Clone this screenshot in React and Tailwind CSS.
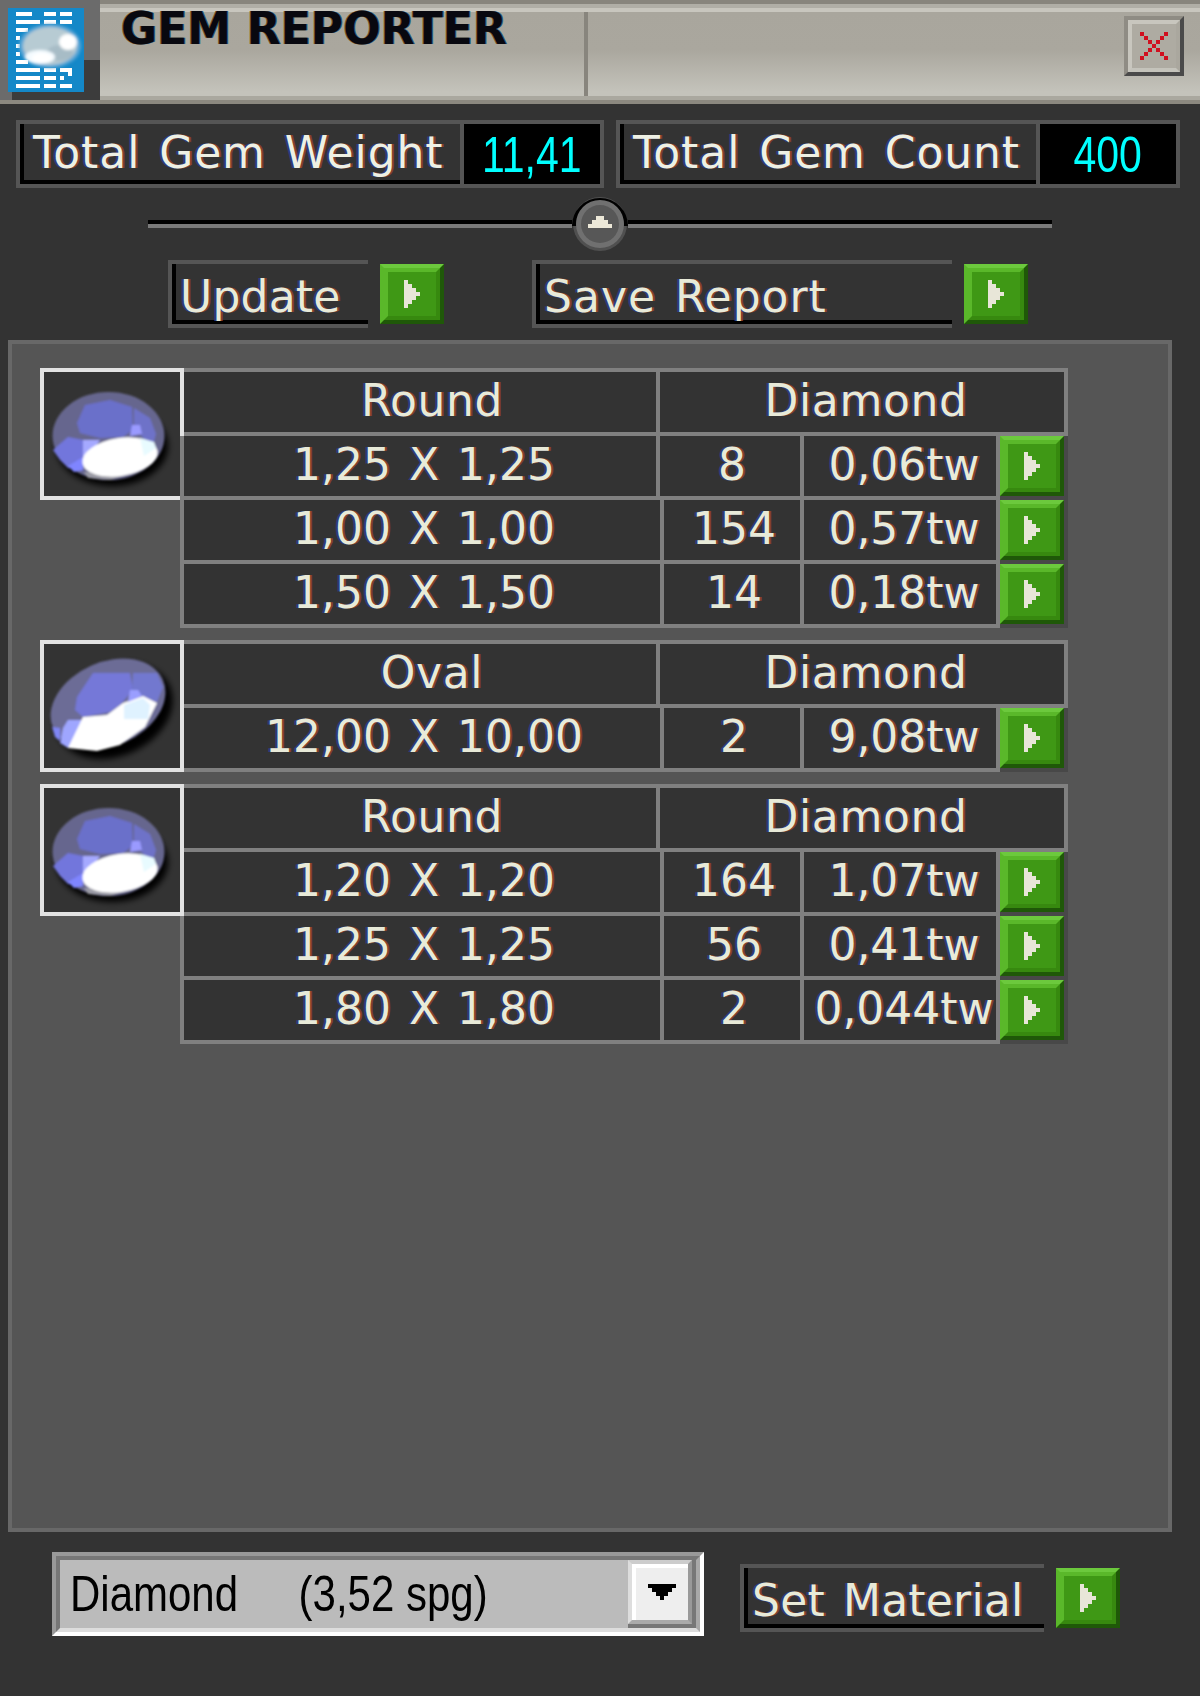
const LINE = "border-[#808080]";
const FRINGE = "[text-shadow:-2px_0_#2c3a7c,2px_0_#85402c]";

const groups = [
  {
    gem: "round",
    overIcon: true,
    shape: "Round",
    rows: [
      { size: "1,25 X 1,25", qty: "8", weight: "0,06tw", narrow: true },
      { size: "1,00 X 1,00", qty: "154", weight: "0,57tw" },
      { size: "1,50 X 1,50", qty: "14", weight: "0,18tw" },
    ],
  },
  {
    gem: "oval",
    shape: "Oval",
    rows: [{ size: "12,00 X 10,00", qty: "2", weight: "9,08tw" }],
  },
  {
    gem: "round",
    shape: "Round",
    rows: [
      { size: "1,20 X 1,20", qty: "164", weight: "1,07tw" },
      { size: "1,25 X 1,25", qty: "56", weight: "0,41tw" },
      { size: "1,80 X 1,80", qty: "2", weight: "0,044tw" },
    ],
  },
];

function AppIcon() {
  const lines = [
    [12, 16, 16], [12, 44, 12], [12, 60, 12],
    [20, 16, 24], [20, 44, 12], [20, 60, 12],
    [28, 16, 12], [36, 16, 4], [44, 16, 4], [52, 16, 4], [60, 16, 12],
    [68, 16, 24], [68, 44, 12], [68, 60, 12],
    [76, 16, 24], [76, 44, 12], [76, 60, 4],
    [84, 16, 24], [84, 44, 12], [84, 60, 12],
  ];
  return (
    <svg width="100" height="104" viewBox="0 0 100 104" className="block shrink-0" shapeRendering="crispEdges">
      <filter id="icon-soft"><feGaussianBlur stdDeviation="1.6" /></filter>
      <rect width="100" height="100" fill="#6b6b6b" />
      <rect x="84" y="60" width="16" height="40" fill="#3c3c3c" />
      <rect x="12" y="92" width="88" height="8" fill="#3c3c3c" />
      <rect y="100" width="100" height="4" fill="#8c8980" />
      <rect x="8" y="8" width="76" height="84" fill="#1488c8" />
      {lines.map(([y, x, w], i) => (
        <rect key={i} x={x} y={y} width={w} height="4" fill="#fff" />
      ))}
      <rect x="68" y="72" width="4" height="4" fill="#fff" />
      <g shapeRendering="auto" filter="url(#icon-soft)">
        <ellipse cx="50" cy="46" rx="31" ry="22" fill="#5aa6d6" />
        <ellipse cx="50" cy="46" rx="27" ry="19" fill="#b7cbd3" />
        <ellipse cx="60" cy="53" rx="13" ry="8" fill="#a7bcc6" />
        <ellipse cx="68" cy="42" rx="9" ry="8" fill="#fff" />
        <ellipse cx="40" cy="57" rx="15" ry="7" fill="#f4fbff" />
        <ellipse cx="42" cy="58" rx="10" ry="5" fill="#fff" />
      </g>
    </svg>
  );
}

function Gem({ kind }) {
  const id = kind + "-shadow";
  const soft = kind + "-soft";
  if (kind === "oval") {
    return (
      <svg width="136" height="124" viewBox="0 0 136 124" className="block">
        <filter id={id}><feGaussianBlur stdDeviation="3" /></filter>
        <filter id={soft}><feGaussianBlur stdDeviation="0.8" /></filter>
        <ellipse cx="70" cy="67" rx="61" ry="45" transform="rotate(-24 70 67)" fill="#000" filter={`url(#${id})`} />
        <g filter={`url(#${soft})`}>
          <ellipse cx="64" cy="60" rx="60" ry="42" transform="rotate(-24 64 60)" fill="#6c6c96" />
          <polygon points="33,53 49,29 86,29 89,46 76,61 66,68 39,73 31,66" fill="#7478d8" />
          <polygon points="89,29 113,29 119,43 113,58 99,53 88,46" fill="#7278cf" />
          <polygon points="24,76 39,76 48,86 24,104 16,99 19,84" fill="#9fa6ff" />
          <polygon points="8,83 16,84 16,98 23,103 11,93" fill="#7f85f4" />
          <polygon points="24,104 39,73 63,71 79,59 99,52 113,59 101,83 76,101 53,107" fill="#fff" />
          <polygon points="80,61 99,54 106,61 104,75 80,75" fill="#dff2ff" />
          <polygon points="86,46 94,46 98,52 84,58" fill="#9a9eff" />
        </g>
      </svg>
    );
  }
  return (
    <svg width="136" height="124" viewBox="0 0 136 124" className="block">
      <filter id={id}><feGaussianBlur stdDeviation="3" /></filter>
      <filter id={soft}><feGaussianBlur stdDeviation="0.8" /></filter>
      <ellipse cx="68" cy="74" rx="56" ry="40" fill="#000" filter={`url(#${id})`} />
      <g filter={`url(#${soft})`}>
        <ellipse cx="64.5" cy="64" rx="56" ry="44" fill="#66668e" />
        <polygon points="33,51 41,33 66,28 88,35 89,58 79,65 56,66 36,61" fill="#6b6fca" />
        <polygon points="90,36 106,46 112,62 108,76 96,62 90,56" fill="#6e72c8" />
        <polygon points="9,78 24,65 39,68 39,98 24,96 16,88" fill="#7276dc" />
        <polygon points="24,94 39,85 39,98 30,100" fill="#7f85ff" />
        <polygon points="39,68 56,68 46,83 39,85" fill="#a5a9ff" />
        <polygon points="88,53 96,53 98,62 86,64" fill="#9a9aff" />
        <polygon points="40,100 90,100 66,108 44,106" fill="#9a9aa4" />
        <ellipse cx="76" cy="85" rx="38" ry="19" transform="rotate(-9 76 85)" fill="#fff" />
        <polygon points="96,66 110,70 112,76 100,84" fill="#e8fbff" />
      </g>
    </svg>
  );
}

function PlayIcon() {
  return (
    <svg width="16" height="28" viewBox="0 0 16 28" shapeRendering="crispEdges">
      <path d="M0 0h4v4h4v4h4v4h4v4h-4v4h-4v4h-4v4h-4z" fill="#e8e6d8" />
    </svg>
  );
}

function GreenButton({ className = "" }) {
  return (
    <div className={`h-[60px] w-16 shrink-0 border-4 border-t-[#6cc93d] border-l-[#5ab82a] border-r-[#1f5808] border-b-[#1f5808] ${className}`}>
      <div className="flex h-full items-center justify-center border-4 border-t-[#5ab82a] border-l-[#5ab82a] border-r-[#37890f] border-b-[#37890f] bg-[#3f9815]">
        <PlayIcon />
      </div>
    </div>
  );
}

// sunken label: grey frame outside, black edge left and bottom
function LabelBox({ children, className = "" }) {
  return (
    <div className={`h-[68px] border-4 border-r-0 border-[#555555] ${className}`}>
      <div className={`flex h-full items-center whitespace-nowrap border-b-4 border-l-4 border-black pl-1 pt-[10px] text-[44px] leading-none text-[#e8ead8] [word-spacing:4px] ${FRINGE}`}>
        {children}
      </div>
    </div>
  );
}

function Readout({ label, value, width, labelWidth }) {
  return (
    <div className={`flex h-[68px] border-4 border-[#555555] ${width}`}>
      <div className={`flex border-r-4 border-[#555555] ${labelWidth}`}>
        <div className={`flex w-full items-center whitespace-nowrap border-b-4 border-l-4 border-black pl-[9px] pt-0.5 text-[44px] leading-none tracking-[.9px] text-[#eef0e4] [word-spacing:4px] ${FRINGE}`}>
          {label}
        </div>
      </div>
      <div className="flex flex-1 items-center justify-center bg-black pt-0.5 font-['Liberation_Sans',sans-serif] text-[50px] leading-none text-[#00ffff]">
        <span className="inline-block scale-x-[.82]">{value}</span>
      </div>
    </div>
  );
}

function Knob() {
  return (
    <svg width="56" height="56" viewBox="0 0 56 56" className="block shrink-0">
      <circle cx="28" cy="28" r="27" fill="#505050" />
      <path d="M2 30a26 26 0 0 1 52 0" fill="none" stroke="#000" strokeWidth="4" />
      <circle cx="28" cy="28" r="24" fill="#707070" />
      <circle cx="28" cy="28" r="19" fill="#575757" />
      <path d="M24 20h8v4h4v4h4v4h-24v-4h4v-4h4z" fill="#ece8d8" shapeRendering="crispEdges" />
    </svg>
  );
}

function Row({ row, overIcon }) {
  return (
    <div className={`flex h-16 bg-[#484848] pr-1 ${overIcon ? "relative z-20" : ""}`}>
      <div className={`flex flex-1 border-b-4 border-l-4 ${LINE} bg-[#333333]`}>
        <div className={`flex items-center justify-center border-r-4 ${LINE} pb-0.5 pl-2 ${row.narrow ? "w-[476px]" : "w-[480px] pr-1"}`}>
          {row.size}
        </div>
        <div className={`flex items-center justify-center border-r-4 ${LINE} pb-0.5 pl-1 ${row.narrow ? "w-[144px]" : "w-[140px]"}`}>
          {row.qty}
        </div>
        <div className={`flex w-[196px] items-center justify-center border-r-4 ${LINE} pb-0.5 pl-2`}>
          {row.weight}
        </div>
      </div>
      <GreenButton />
    </div>
  );
}

function Group({ group }) {
  return (
    <div className="flex items-start">
      <div className="relative z-10 h-[132px] w-36 shrink-0 border-4 border-[#e2e2e2] bg-[#333333]">
        <Gem kind={group.gem} />
      </div>
      <div className={`-ml-1 w-[888px] text-[44px] leading-none text-[#e8ead8] [word-spacing:4px] ${FRINGE}`}>
        <div className={`ml-1 flex h-[68px] border-y-4 border-r-4 ${LINE} bg-[#333333] tracking-[.6px]`}>
          <div className={`flex w-[476px] items-center justify-center border-r-4 ${LINE} pb-0.5 pl-6`}>{group.shape}</div>
          <div className="flex flex-1 items-center justify-center pb-0.5 pl-2">Diamond</div>
        </div>
        {group.rows.map((row, i) => (
          <Row key={i} row={row} overIcon={group.overIcon} />
        ))}
      </div>
    </div>
  );
}

export default function App() {
  return (
    <div className="h-[1696px] w-[1200px] overflow-hidden bg-[#333333] font-['DejaVu_Sans',sans-serif]">
      <header className="flex h-[104px] bg-[linear-gradient(#88857d_4px,#b0aea6_4px,#b0aea6_8px,#c8c6be_8px,#c8c6be_12px,#a9a69d_12px,#aaa79e_50px,#c4c3bb_92px,#c4c3bb_96px,#aaa89f_96px,#aaa89f_100px,#8c8980_100px)]">
        <AppIcon />
        <div className="mt-3 h-[84px] w-[488px] border-r-4 border-[#88857d] pl-[21px] text-[44px] font-bold leading-[34px] tracking-[.1px] text-[#08080f] [text-shadow:-1px_0_#7a5a2a,1px_0_#2a5a7a]">
          GEM REPORTER
        </div>
        <div className="ml-auto mr-4 mt-4 h-[60px] w-[60px] border-4 border-t-[#8f8c84] border-l-[#8f8c84] border-r-[#4a4a4a] border-b-[#4a4a4a]">
          <div className="flex h-full items-center justify-center border-4 border-[#c8c6be] border-r-[#aaa79e] border-b-[#c4c3bb] bg-[#aeaba2]">
            <svg width="28" height="28" viewBox="0 0 28 28" shapeRendering="crispEdges">
              <path
                d="M0 0h4v4h-4zM24 0h4v4h-4zM4 4h4v4h-4zM20 4h4v4h-4zM8 8h4v4h-4zM16 8h4v4h-4zM12 12h4v4h-4zM8 16h4v4h-4zM16 16h4v4h-4zM4 20h4v4h-4zM20 20h4v4h-4zM0 24h4v4h-4zM24 24h4v4h-4z"
                fill="#d01020"
              />
            </svg>
          </div>
        </div>
      </header>

      <div className="mt-4 flex gap-3 pl-4">
        <Readout label="Total Gem Weight" value="11,41" width="w-[588px]" labelWidth="w-[444px]" />
        <Readout label="Total Gem Count" value="400" width="w-[564px]" labelWidth="w-[420px]" />
      </div>

      <div className="mt-2 flex h-14 items-center pl-[148px]">
        <div className="h-2 w-[424px] border-t-4 border-black bg-[#7a7a7a]" />
        <Knob />
        <div className="h-2 w-[424px] border-t-4 border-black bg-[#7a7a7a]" />
      </div>

      <div className="mt-2 flex pl-[168px]">
        <LabelBox className="w-[200px] tracking-[.2px]">Update</LabelBox>
        <GreenButton className="ml-3 mt-1" />
        <LabelBox className="ml-[88px] w-[420px] tracking-[1px]">Save Report</LabelBox>
        <GreenButton className="ml-3 mt-1" />
      </div>

      <main className="ml-2 mt-3 flex h-[1192px] w-[1164px] flex-col gap-3 border-4 border-[#686868] bg-[#555555] pl-7 pt-6">
        {groups.map((group, i) => (
          <Group key={i} group={group} />
        ))}
      </main>

      <div className="mt-5 flex items-start pl-[52px]">
        <div className="h-[84px] w-[652px] border-4 border-t-[#999999] border-l-[#999999] border-r-white border-b-white">
          <div className="flex h-full border-4 border-t-[#777777] border-l-[#777777] border-r-[#a8a8a8] border-b-[#dddddd] bg-[#bbbbbb]">
            <div className="flex flex-1 items-center overflow-hidden pl-[10px] font-['Liberation_Sans',sans-serif] text-[50px] leading-none text-black">
              <span className="inline-block origin-left scale-x-[.84] whitespace-nowrap">
                Diamond<span className="ml-[72px]">(3,52 spg)</span>
              </span>
            </div>
            <div className="h-full w-[68px] shrink-0 border-b-4 border-r-4 border-[#777777]">
              <div className="h-full border-4 border-t-[#cccccc] border-l-[#dddddd] border-r-[#999999] border-b-[#aaaaaa]">
                <div className="flex h-full items-center justify-center border-l-4 border-t-4 border-white bg-[#eeeeee] pb-1">
                  <svg width="28" height="16" viewBox="0 0 28 16" shapeRendering="crispEdges">
                    <path d="M0 0h28v4h-4v4h-4v4h-4v4h-4v-4h-4v-4h-4v-4h-4z" fill="#000" />
                  </svg>
                </div>
              </div>
            </div>
          </div>
        </div>
        <LabelBox className="ml-9 mt-3 w-[304px] tracking-[.2px]">Set Material</LabelBox>
        <GreenButton className="ml-3 mt-4" />
      </div>
    </div>
  );
}
